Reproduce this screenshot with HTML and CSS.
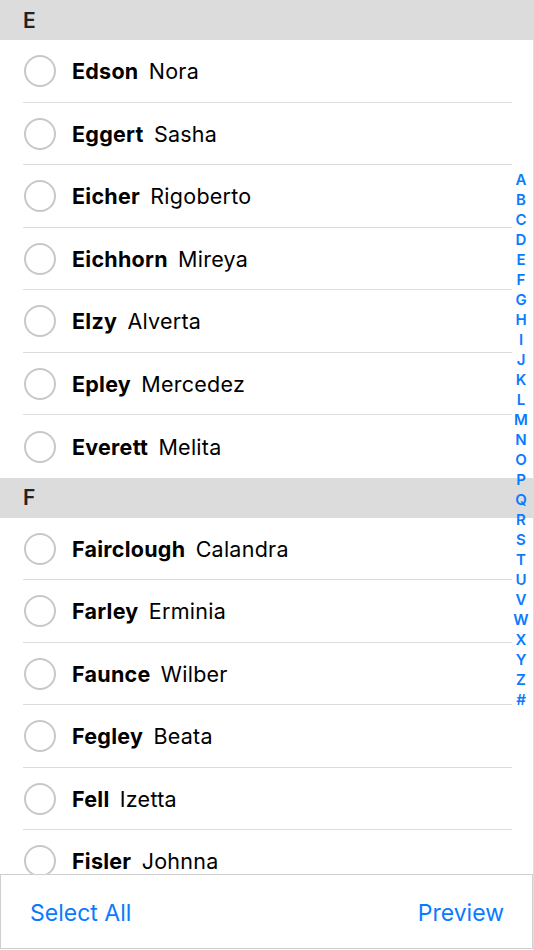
FILE: index.html
```html
<!DOCTYPE html>
<html>
<head>
<meta charset="utf-8">
<link rel="stylesheet" href="styles.css">
</head>
<body>
<div class="page">
  <div class="list">
    <div class="section-header">E</div>
    <div class="row"><span class="radio"></span><span class="name"><b>Edson</b> Nora</span></div>
    <div class="row"><span class="radio"></span><span class="name"><b>Eggert</b> Sasha</span></div>
    <div class="row"><span class="radio"></span><span class="name"><b>Eicher</b> Rigoberto</span></div>
    <div class="row"><span class="radio"></span><span class="name"><b>Eichhorn</b> Mireya</span></div>
    <div class="row"><span class="radio"></span><span class="name"><b>Elzy</b> Alverta</span></div>
    <div class="row"><span class="radio"></span><span class="name"><b>Epley</b> Mercedez</span></div>
    <div class="row last"><span class="radio"></span><span class="name"><b>Everett</b> Melita</span></div>
    <div class="section-header">F</div>
    <div class="row"><span class="radio"></span><span class="name"><b>Fairclough</b> Calandra</span></div>
    <div class="row"><span class="radio"></span><span class="name"><b>Farley</b> Erminia</span></div>
    <div class="row"><span class="radio"></span><span class="name"><b>Faunce</b> Wilber</span></div>
    <div class="row"><span class="radio"></span><span class="name"><b>Fegley</b> Beata</span></div>
    <div class="row"><span class="radio"></span><span class="name"><b>Fell</b> Izetta</span></div>
    <div class="row"><span class="radio"></span><span class="name"><b>Fisler</b> Johnna</span></div>
  </div>
  <div class="index">
    <span>A</span><span>B</span><span>C</span><span>D</span><span>E</span><span>F</span><span>G</span><span>H</span><span>I</span><span>J</span><span>K</span><span>L</span><span>M</span><span>N</span><span>O</span><span>P</span><span>Q</span><span>R</span><span>S</span><span>T</span><span>U</span><span>V</span><span>W</span><span>X</span><span>Y</span><span>Z</span><span>#</span>
  </div>
  <div class="footer">
    <span class="btn">Select All</span>
    <span class="btn">Preview</span>
  </div>
</div>
</body>
</html>
```
FILE: styles.css
```css
html, body {
  margin: 0;
  padding: 0;
  background: #fff;
}
body {
  font-family: Inter, "Noto Sans", "Liberation Sans", sans-serif;
  color: #000;
}
.page {
  position: relative;
  width: 533px;
  height: 950px;
  border-right: 1px solid #dedede;
  overflow: hidden;
}
.list {
  display: flex;
  flex-direction: column;
}
.section-header {
  height: 40px;
  background: #dcdcdc;
  display: flex;
  align-items: center;
  padding-left: 23px;
  font-size: 21px;
  font-weight: 600;
  color: #222;
}
.row {
  height: 62.5px;
  display: flex;
  align-items: center;
  margin-left: 23px;
  margin-right: 21px;
  box-sizing: border-box;
  border-bottom: 1px solid #dcdcdc;
  gap: 16px;
  padding-top: 1px;
}
.row.last {
  border-bottom: none;
}
.radio {
  width: 28px;
  height: 28px;
  border: 2px solid #c8c8c8;
  border-radius: 50%;
  flex: none;
  margin-left: 1px;
}
.name {
  font-size: 21.5px;
  letter-spacing: 0.25px;
}
.name b {
  font-weight: 700;
  margin-right: 4px;
}
.index {
  position: absolute;
  top: 170px;
  right: 0;
  width: 22px;
  display: flex;
  flex-direction: column;
  align-items: center;
  color: #0a7aff;
  font-size: 15px;
  font-weight: 600;
  line-height: 20px;
  margin-right: 1px;
}
.footer {
  position: absolute;
  left: 0;
  right: 0;
  top: 874px;
  height: 75px;
  box-sizing: border-box;
  border: 1px solid #cfcfcf;
  background: #fff;
  display: flex;
  align-items: center;
  justify-content: space-between;
  padding: 2px 28px 0 29px;
}
.btn {
  font-size: 23px;
  color: #0a7aff;
}
```
